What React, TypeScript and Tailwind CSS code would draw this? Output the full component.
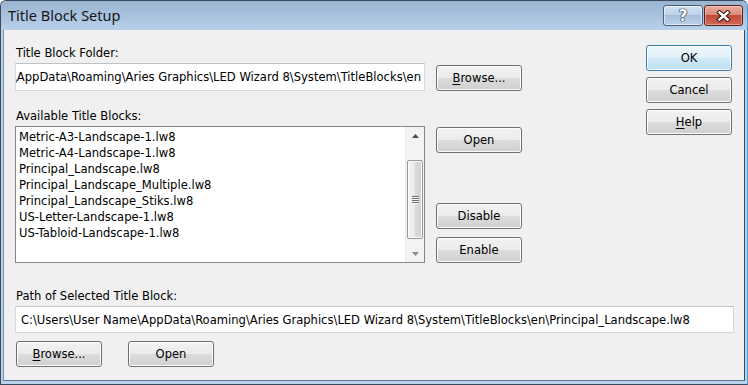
import { ReactNode } from "react";

const folderPath =
  "C:\\Users\\User Name\\AppData\\Roaming\\Aries Graphics\\LED Wizard 8\\System\\TitleBlocks\\en";
const selectedPath = folderPath + "\\Principal_Landscape.lw8";

const titleBlocks = [
  "Metric-A3-Landscape-1.lw8",
  "Metric-A4-Landscape-1.lw8",
  "Principal_Landscape.lw8",
  "Principal_Landscape_Multiple.lw8",
  "Principal_Landscape_Stiks.lw8",
  "US-Letter-Landscape-1.lw8",
  "US-Tabloid-Landscape-1.lw8",
];

function Btn({
  children,
  primary,
  className = "",
}: {
  children: ReactNode;
  primary?: boolean;
  className?: string;
}) {
  return (
    <button
      type="button"
      className={`flex h-[26px] w-[86px] shrink-0 items-center justify-center rounded-[3px] border text-[12.85px] leading-[16px] text-black shadow-[inset_0_0_0_1px_#fcfcfc] ${
        primary
          ? "border-[#3c7fb1] bg-[linear-gradient(to_bottom,#eef7fd_0%,#e1f0fa_50%,#cfe8f7_50%,#bfe0f4_100%)]"
          : "border-[#707070] bg-[linear-gradient(to_bottom,#f2f2f2_0%,#ebebeb_50%,#dddddd_50%,#cfcfcf_100%)]"
      } ${className}`}
    >
      {children}
    </button>
  );
}

function Key({ children }: { children: ReactNode }) {
  return <span className="underline underline-offset-[2px]">{children}</span>;
}

function Label({ children, className = "" }: { children: ReactNode; className?: string }) {
  return (
    <div className={`h-[16px] pl-[1px] text-[12.85px] leading-[16px] text-black ${className}`}>{children}</div>
  );
}

function ScrollBar() {
  return (
    <div className="flex w-[19px] shrink-0 flex-col border-l border-[#e8e8e8] bg-[#f3f3f3]">
      <div className="flex h-[17px] items-center justify-center">
        <svg width="7" height="4" viewBox="0 0 7 4">
          <path d="M0 4 L3.5 0 L7 4 Z" fill="#4a4a4a" />
        </svg>
      </div>
      <div className="h-[16px]" />
      <div className="mx-[1px] flex h-[79px] items-center justify-center rounded-[2px] border border-[#979797] bg-[linear-gradient(to_right,#f4f4f4_0%,#e9e9e9_45%,#d9d9d9_55%,#d0d0d0_100%)] shadow-[inset_0_0_0_1px_#fbfbfb]">
        <svg width="7" height="8" viewBox="0 0 7 8">
          <rect x="0" y="0" width="7" height="1" fill="#6d6d6d" />
          <rect x="0" y="2" width="7" height="1" fill="#6d6d6d" />
          <rect x="0" y="4" width="7" height="1" fill="#6d6d6d" />
          <rect x="0" y="6" width="7" height="1" fill="#6d6d6d" />
          <rect x="0" y="1" width="7" height="1" fill="#f8f8f8" />
          <rect x="0" y="3" width="7" height="1" fill="#f8f8f8" />
          <rect x="0" y="5" width="7" height="1" fill="#f8f8f8" />
          <rect x="0" y="7" width="7" height="1" fill="#f8f8f8" />
        </svg>
      </div>
      <div className="flex-1" />
      <div className="flex h-[17px] items-center justify-center">
        <svg width="7" height="4" viewBox="0 0 7 4">
          <path d="M0 0 L7 0 L3.5 4 Z" fill="#8a8a8a" />
        </svg>
      </div>
    </div>
  );
}

function App() {
  return (
    <div className="h-[385px] w-[748px] overflow-hidden bg-white font-['DejaVu_Sans_Condensed','Liberation_Sans',sans-serif]">
      <div className="flex h-full flex-col rounded-t-[6px] border border-[#394a5f] border-r-[#3fa2dd] bg-[#bad1ea]">
        {/* title bar */}
        <div className="flex h-[29px] shrink-0 items-start justify-between rounded-t-[5px] bg-[linear-gradient(to_bottom,#9ab3d0_0%,#a9c2de_50%,#b9d0ea_100%)] pl-[7px] pr-[4px]">
          <span className="pt-[5px] font-['Noto_Sans',sans-serif] text-[14.5px] leading-[19px] text-[#161616]">
            Title Block Setup
          </span>
          <div className="mt-[4px] flex gap-[1px]">
            <div className="flex h-[21px] w-[40px] items-center justify-center rounded-[3px] border border-[#4c5e77] bg-[linear-gradient(to_bottom,#d3e2f3_0%,#bfd2e9_45%,#a8bfdb_50%,#bcd0e8_100%)] shadow-[inset_0_0_0_1px_rgba(255,255,255,0.55)]">
              <span className="font-['DejaVu_Sans',sans-serif] text-[15px] font-bold leading-[16px] text-white [text-shadow:0_0_1px_#26344a,0_0_1px_#26344a,0_0_1px_#26344a,0_0_1px_#26344a]">
                ?
              </span>
            </div>
            <div className="flex h-[21px] w-[39px] items-center justify-center rounded-[3px] border border-[#5b1f1a] bg-[linear-gradient(to_bottom,#e9ad9f_0%,#d98c7c_45%,#c2493a_50%,#d06a55_100%)] shadow-[inset_0_0_0_1px_rgba(255,255,255,0.35)]">
              <svg width="15" height="12" viewBox="0 0 15 12">
                <path d="M3.5 2.5 L11.5 9.5 M11.5 2.5 L3.5 9.5" stroke="#3b1410" strokeWidth="4.6" strokeLinecap="square" />
                <path d="M3.5 2.5 L11.5 9.5 M11.5 2.5 L3.5 9.5" stroke="#ffffff" strokeWidth="2.6" strokeLinecap="square" />
              </svg>
            </div>
          </div>
        </div>

        {/* client area */}
        <div className="flex-1 px-[2px] pb-[3px]">
          <div className="flex h-full flex-col border-x border-b border-x-[#7d8ea3] border-b-[#5d7594] border-r-[#2c4a6a] bg-[#f0f0f0] pl-[11px] pt-[15px]">
            <div className="flex">
              <div className="flex w-[507px] flex-col">
                <Label>Title Block Folder:</Label>
                <div className="mt-[2px] flex">
                  <div className="flex h-[28px] w-[410px] items-center justify-end overflow-hidden border border-[#d3d9e1] border-t-[#bcc2ca] bg-white pr-[3px]">
                    <span className="whitespace-nowrap text-[12.85px] leading-[16px] text-black">{folderPath}</span>
                  </div>
                  <Btn className="ml-[11px] mt-[2px]">
                    <Key>B</Key>rowse...
                  </Btn>
                </div>

                <Label className="mt-[17px]">Available Title Blocks:</Label>
                <div className="mt-[2px] flex">
                  <div className="flex h-[137px] w-[410px] border border-[#828790] bg-white">
                    <div className="flex-1 pl-[3px] pt-[2px]">
                      {titleBlocks.map((name) => (
                        <div key={name} className="h-[16px] whitespace-nowrap text-[12.85px] leading-[16px] text-black">
                          {name}
                        </div>
                      ))}
                    </div>
                    <ScrollBar />
                  </div>
                  <div className="ml-[11px] flex flex-col">
                    <Btn className="mt-[1px]">Open</Btn>
                    <Btn className="mt-[50px]">Disable</Btn>
                    <Btn className="mt-[8px]">Enable</Btn>
                  </div>
                </div>
              </div>

              <div className="ml-[124px] flex flex-col gap-[6px]">
                <Btn primary>OK</Btn>
                <Btn>Cancel</Btn>
                <Btn>
                  <Key>H</Key>elp
                </Btn>
              </div>
            </div>

            <Label className="mt-[25px]">Path of Selected Title Block:</Label>
            <div className="mt-[2px] flex h-[27px] w-[719px] items-center overflow-hidden border border-[#d3d9e1] border-t-[#bcc2ca] bg-white pl-[5px]">
              <span className="whitespace-nowrap text-[12.85px] leading-[16px] text-black">{selectedPath}</span>
            </div>

            <div className="mt-[8px] flex pl-[1px]">
              <Btn>
                <Key>B</Key>rowse...
              </Btn>
              <Btn className="ml-[26px]">Open</Btn>
            </div>
          </div>
        </div>
      </div>
    </div>
  );
}

export default App;
